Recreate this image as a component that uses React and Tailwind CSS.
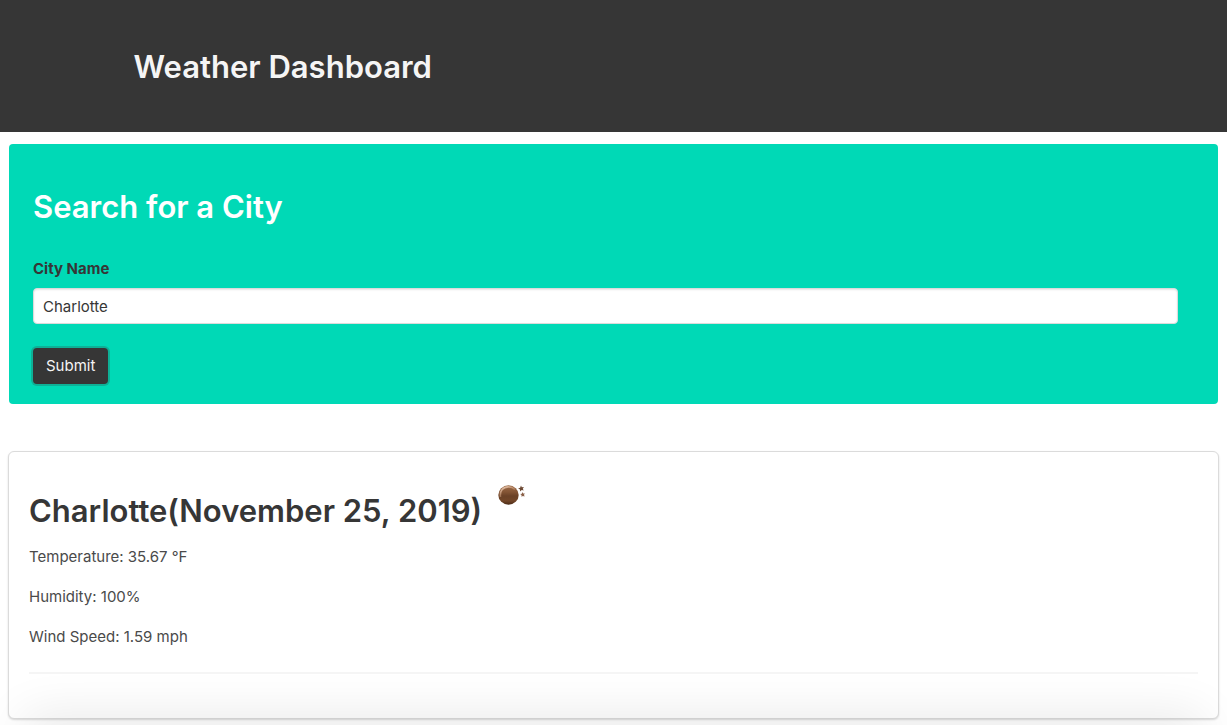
import { useState } from "react";

function NightMistIcon() {
  return (
    <svg width="30" height="24" viewBox="0 0 30 24" role="img" aria-label="Misty night">
      <defs>
        <linearGradient id="moon" x1="0" y1="0" x2="0" y2="1">
          <stop offset="0" stopColor="#9c6c49" />
          <stop offset="0.35" stopColor="#835434" />
          <stop offset="0.55" stopColor="#6b4227" />
          <stop offset="0.8" stopColor="#724628" />
          <stop offset="1" stopColor="#4a2a16" />
        </linearGradient>
        <linearGradient id="shine" x1="0" y1="0" x2="0.8" y2="1">
          <stop offset="0" stopColor="#f5d9c4" />
          <stop offset="0.5" stopColor="#d3a584" stopOpacity="0.6" />
          <stop offset="1" stopColor="#c08a66" stopOpacity="0" />
        </linearGradient>
      </defs>
      <ellipse cx="11.5" cy="13" rx="10.2" ry="9.7" fill="url(#moon)" />
      <path d="M3.500 15C2.500 8.500 6.300 5 11.500 4.900c2.700 0 4.700.9 6.500 2.600" fill="none" stroke="url(#shine)" strokeWidth="1.600" />
      <path d="M24 3.600l.8 1.700 2.100-.2-1.100 1.600.9 1.800-2-.4-1.600 1.300-.1-2-1.900-.9 2-.7z" fill="#6d4934" />
      <path d="M25.400 10.100l.8 1.400 1.700-.1-.9 1.400.6 1.700-1.700-.6-1.400.9v-1.700l-1.300-1 1.700-.4z" fill="#8a6048" />
    </svg>
  );
}

const readings = ["Temperature: 35.67 °F", "Humidity: 100%", "Wind Speed: 1.59 mph"];

export default function App() {
  const [city, setCity] = useState("Charlotte");

  return (
    <div className="relative overflow-hidden bg-white pb-[7px] font-['Inter',sans-serif] text-[15px] leading-6 text-[#4a4a4a]">
      <header className="bg-[#363636] px-6 pt-[49px] pb-[47px]">
        <div className="mx-auto max-w-[960px]">
          <h1 className="text-[31px] leading-9 font-semibold text-[#f5f5f5]">Weather Dashboard</h1>
        </div>
      </header>

      <main className="px-2 pt-3">
        <section className="mx-px rounded bg-[#00d9b6] pt-[45px] pr-10 pb-5 pl-6">
          <h2 className="text-[31px] leading-9 font-semibold text-white">Search for a City</h2>
          <form className="mt-8" onSubmit={(event) => event.preventDefault()}>
            <label htmlFor="city" className="mb-[7px] block font-bold text-[#363636]">
              City Name
            </label>
            <input
              id="city"
              type="text"
              value={city}
              onChange={(event) => setCity(event.target.value)}
              className="block h-9 w-full rounded border border-[#dbdbdb] bg-white px-[9px] text-[#363636] shadow-[inset_0_1px_2px_rgba(10,10,10,0.1)] outline-none"
            />
            <button
              type="submit"
              className="mt-6 block h-9 rounded bg-[#363636] px-[13px] text-[#f5f5f5] shadow-[0_0_0_2px_rgba(54,54,54,0.25)]"
            >
              Submit
            </button>
          </form>
        </section>

        <section className="mt-[47px] rounded-md border border-[#dbdbdb] bg-white px-5 pt-[30px] pb-11 shadow-[0_1px_2px_rgba(10,10,10,0.15)]">
          <div className="flex items-start gap-[15px]">
            <h2 className="mt-[11px] text-[31px] leading-9 font-semibold text-[#363636]">
              {"Charlotte(November 25, 2019)"}
            </h2>
            <NightMistIcon />
          </div>
          <div className="mt-4 flex flex-col gap-4">
            {readings.map((reading) => (
              <p key={reading}>{reading}</p>
            ))}
          </div>
          <hr className="mt-[23px] h-[2px] border-0 bg-[#f5f5f5]" />
        </section>
      </main>

      <div className="pointer-events-none absolute inset-x-8 top-full h-5 shadow-[0_0_50px_8px_rgba(0,0,0,0.11)]" />
    </div>
  );
}
